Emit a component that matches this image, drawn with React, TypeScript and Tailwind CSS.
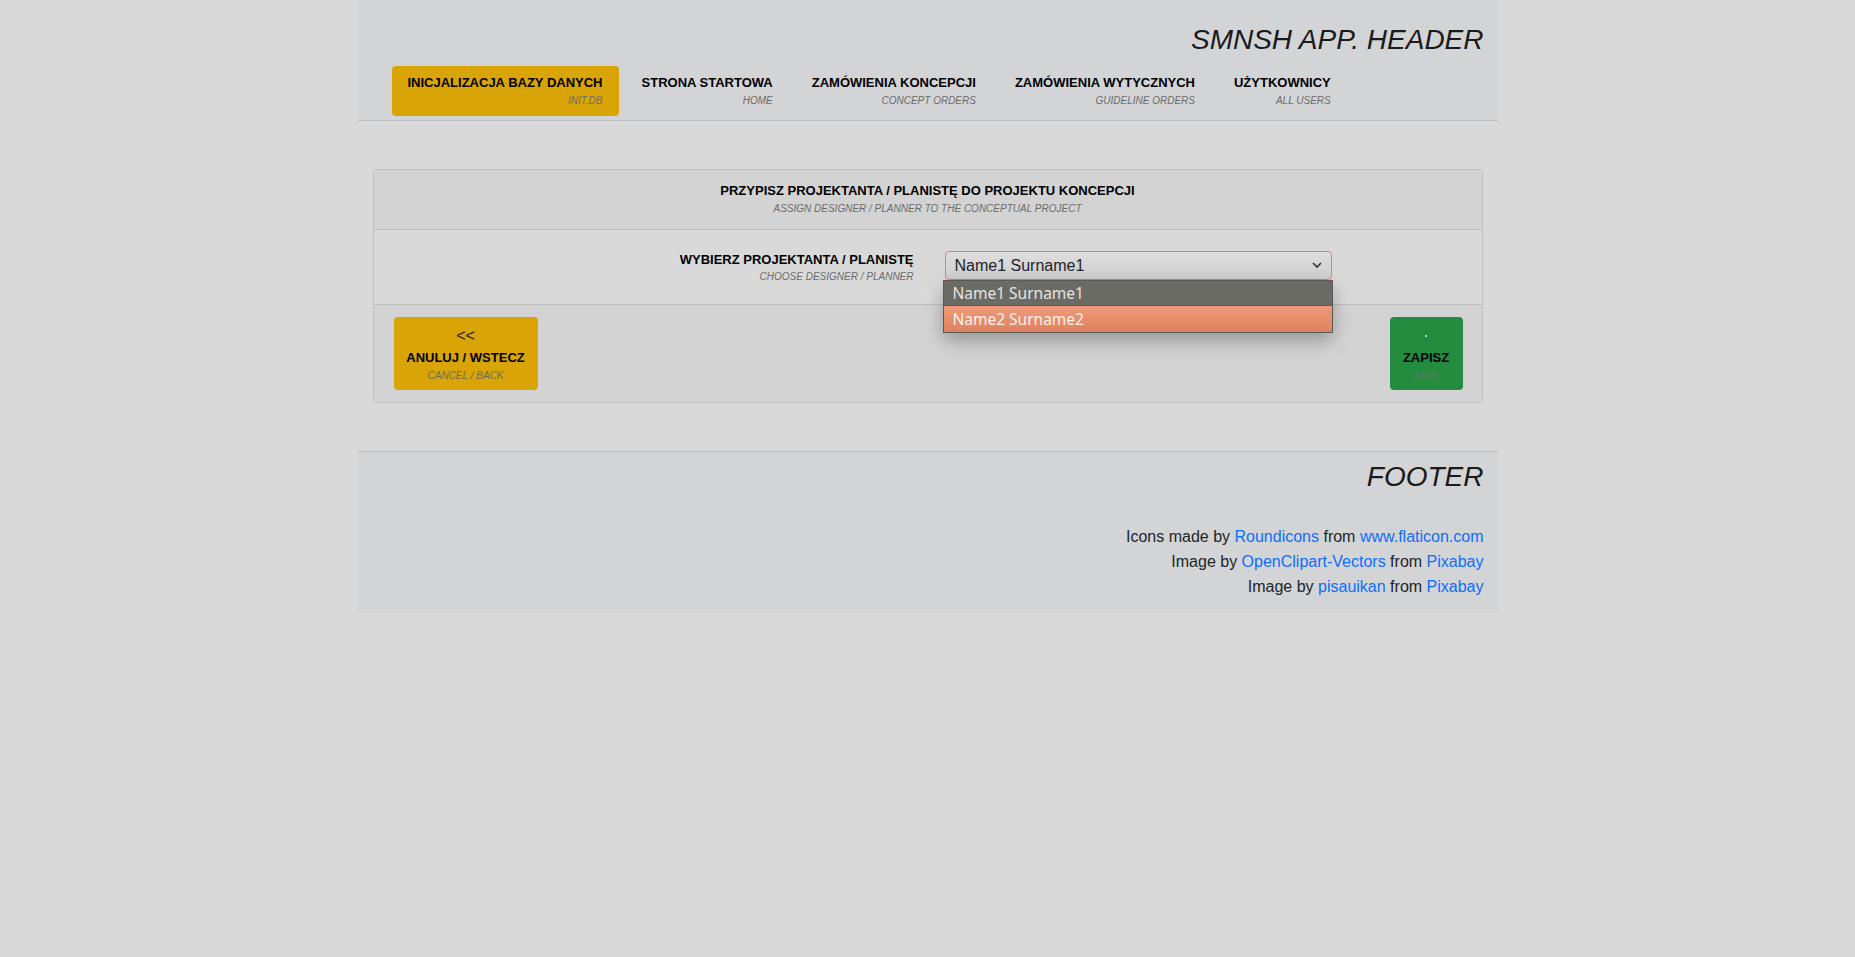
import React from 'react';

const navItems = [
  { pl: 'INICJALIZACJA BAZY DANYCH', en: 'INIT.DB', active: true },
  { pl: 'STRONA STARTOWA', en: 'HOME' },
  { pl: 'ZAMÓWIENIA KONCEPCJI', en: 'CONCEPT ORDERS' },
  { pl: 'ZAMÓWIENIA WYTYCZNYCH', en: 'GUIDELINE ORDERS' },
  { pl: 'UŻYTKOWNICY', en: 'ALL USERS' },
];

const NavItem: React.FC<{ pl: string; en: string; active?: boolean }> = ({ pl, en, active }) => (
  <a
    className={
      'flex flex-col items-end h-[50px] px-[16px] pt-[7px] rounded-[4px] ' +
      (active ? 'bg-[#d9a406]' : '')
    }
  >
    <span className="text-[13px] leading-[19.5px] font-bold text-black">{pl}</span>
    <span className="text-[10px] leading-[15px] italic text-[#6c6c6c] mt-[1px]">{en}</span>
  </a>
);

const Chevron = () => (
  <svg width="10" height="7" viewBox="0 0 10 7" fill="none">
    <polyline points="1,1 5,5 9,1" stroke="#333" strokeWidth="1.6" />
  </svg>
);

export default function App() {
  return (
    <div className="min-h-screen bg-[#d9d9d9] font-['Liberation_Sans',Arial,sans-serif] text-[#212529]">
      <div className="w-[1140px] mx-auto">
        {/* header */}
        <header className="bg-[#d3d4d6] border-b border-[#bcbdbf] h-[121px] flex flex-col">
          <h1 className="text-right pr-[14px] pt-[23px] text-[28px] leading-[1.2] italic text-[#1a1a1a]">
            SMNSH APP. HEADER
          </h1>
          <nav className="flex gap-[7px] pl-[34px] mt-[9px]">
            {navItems.map((n) => (
              <NavItem key={n.pl} {...n} />
            ))}
          </nav>
        </header>

        {/* main card */}
        <main className="pt-[48px] px-[15px]">
          <div className="border border-[#c0c0c0] rounded-[4px]">
            <div className="h-[60px] bg-[#d3d3d3] border-b border-[#bdbdbd] flex flex-col items-center pt-[11px] rounded-t-[4px]">
              <span className="text-[13px] leading-[19.5px] font-bold text-black">
                PRZYPISZ PROJEKTANTA / PLANISTĘ DO PROJEKTU KONCEPCJI
              </span>
              <span className="text-[10px] leading-[15px] italic text-[#6c6c6c]">
                ASSIGN DESIGNER / PLANNER TO THE CONCEPTUAL PROJECT
              </span>
            </div>

            <div className="h-[75px] bg-[#d9d9d9] border-b border-[#bdbdbd] flex items-start pt-[20px] gap-[31px]">
              <div className="w-[540px] flex flex-col items-end">
                <span className="text-[13px] leading-[19.5px] font-bold text-black">
                  WYBIERZ PROJEKTANTA / PLANISTĘ
                </span>
                <span className="text-[10px] leading-[15px] italic text-[#6c6c6c] -mt-[1px]">
                  CHOOSE DESIGNER / PLANNER
                </span>
              </div>
              <div className="relative w-[387px] mt-[1px]">
                <div className="h-[29px] rounded-[4px] border border-[#d5866a] bg-linear-to-b from-[#dedede] to-[#cecece] flex items-center justify-between pl-[9px] pr-[9px]">
                  <span className="text-[16px] text-[#212529]">Name1 Surname1</span>
                  <Chevron />
                </div>
                {/* open native option list */}
                <div className="absolute left-[-2px] top-[29px] w-[390px] z-10 border border-[#5a5a56] bg-[#5a5a56] shadow-[0_8px_18px_rgba(0,0,0,0.28)] font-['Noto_Sans','Open_Sans',sans-serif] text-[15.5px]">
                  <div className="h-[24px] bg-[#6b6b65] text-[#e4e4e0] pl-[9px] leading-[24px]">
                    Name1 Surname1
                  </div>
                  <div className="h-[26px] mt-[1px] bg-linear-to-b from-[#ef9b7b] to-[#df815e] text-[#fff3ee] pl-[9px] leading-[26px]">
                    Name2 Surname2
                  </div>
                </div>
              </div>
            </div>

            <div className="h-[97px] bg-[#d3d3d3] flex items-center justify-between pl-[20px] pr-[19px] rounded-b-[4px]">
              <button className="w-[144px] h-[73px] bg-[#d9a406] rounded-[4px] flex flex-col items-center pt-[7px]">
                <span className="text-[16px] leading-[24px] text-[#1a1a1a]">&lt;&lt;</span>
                <span className="text-[13px] leading-[19.5px] font-bold text-black">ANULUJ / WSTECZ</span>
                <span className="text-[10px] leading-[15px] italic text-[#6f6a5a]">CANCEL / BACK</span>
              </button>
              <button className="w-[73px] h-[73px] bg-[#238c3e] rounded-[4px] flex flex-col items-center pt-[7px]">
                <span className="h-[24px] flex items-center">
                  <span className="w-[2px] h-[2px] bg-[#a8dbe0]" />
                </span>
                <span className="text-[13px] leading-[19.5px] font-bold text-black">ZAPISZ</span>
                <span className="text-[10px] leading-[15px] italic text-[#587c62]">SAVE</span>
              </button>
            </div>
          </div>
        </main>

        {/* footer */}
        <footer className="mt-[48px] bg-[#d3d4d6] border-t border-[#bcbdbf] h-[162px] pr-[14px] pt-[8px] text-right">
          <h2 className="text-[28px] leading-[1.2] italic text-[#1a1a1a]">FOOTER</h2>
          <div className="mt-[30px] text-[16px] leading-[25px] text-[#212529]">
            <div>
              Icons made by <a className="text-[#0d6efd]">Roundicons</a> from{' '}
              <a className="text-[#0d6efd]">www.flaticon.com</a>
            </div>
            <div>
              Image by <a className="text-[#0d6efd]">OpenClipart-Vectors</a> from{' '}
              <a className="text-[#0d6efd]">Pixabay</a>
            </div>
            <div>
              Image by <a className="text-[#0d6efd]">pisauikan</a> from{' '}
              <a className="text-[#0d6efd]">Pixabay</a>
            </div>
          </div>
        </footer>
      </div>
    </div>
  );
}
